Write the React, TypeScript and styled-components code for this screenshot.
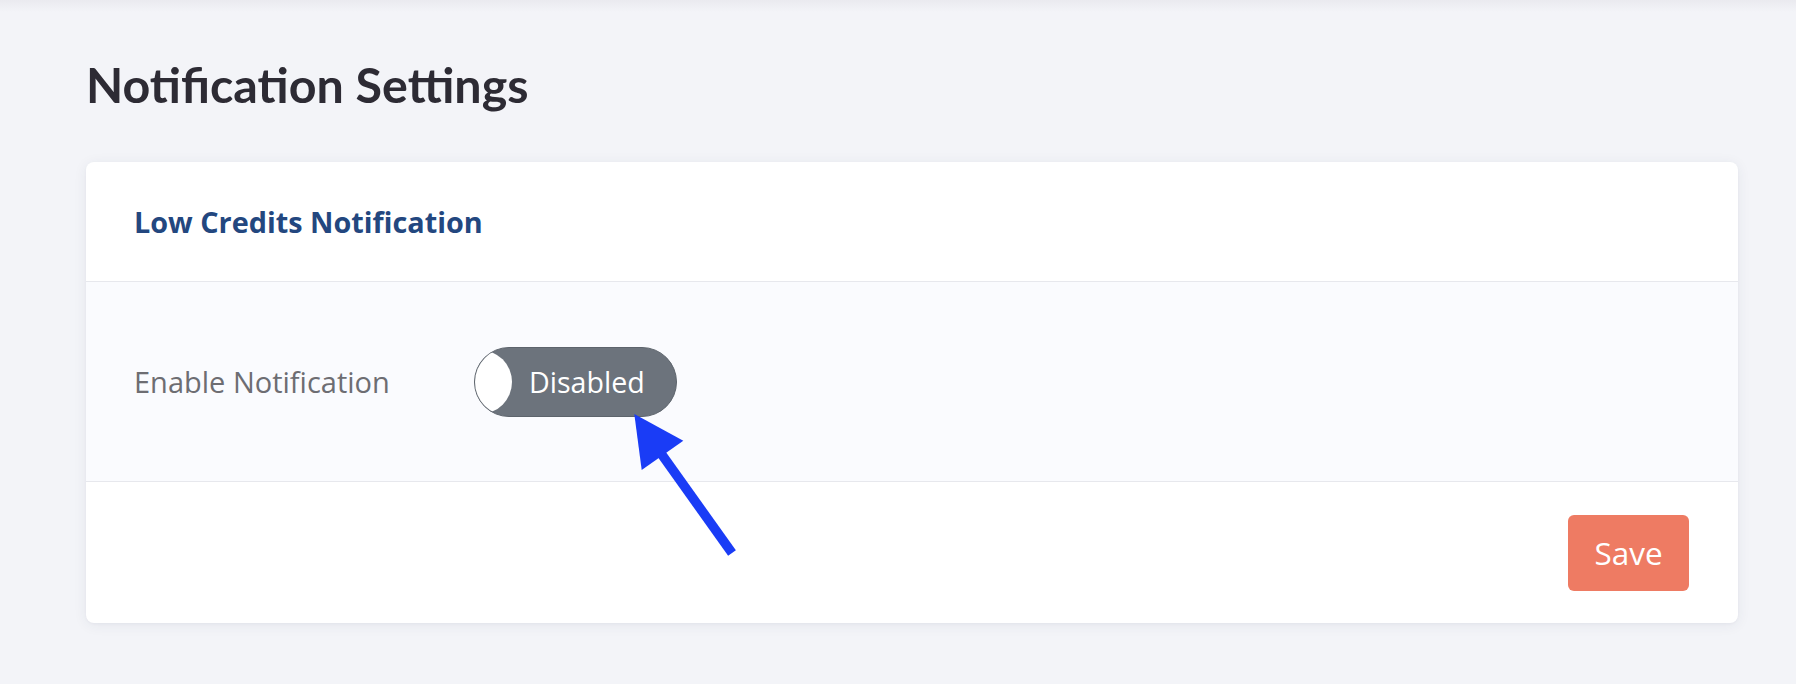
import React from "react";
import styled, { createGlobalStyle } from "styled-components";

const GlobalStyle = createGlobalStyle`
  html, body {
    margin: 0;
    padding: 0;
    background: #f3f4f8;
  }
  body {
    font-family: "Open Sans", "Noto Sans", sans-serif;
    -webkit-font-smoothing: antialiased;
  }
  * { box-sizing: border-box; }
`;

const Page = styled.main`
  position: relative;
  min-height: 684px;
  padding: 55px 58px 60px 86px;
  display: flex;
  flex-direction: column;
  gap: 48px;
  background: linear-gradient(to bottom, #eaeaef 0px, #f3f4f8 12px, #f3f4f8 100%);
`;

const Title = styled.h1`
  margin: 0;
  font-family: Lato, "Open Sans", sans-serif;
  font-weight: 700;
  font-size: 48.4px;
  line-height: 59px;
  color: #2d2b34;
`;

const Card = styled.section`
  background: #ffffff;
  border-radius: 8px;
  box-shadow: 0 2px 14px rgba(40, 50, 90, 0.07), 0 1px 3px rgba(40, 50, 90, 0.04);
  overflow: hidden;
  display: flex;
  flex-direction: column;
`;

const CardHeader = styled.header`
  height: 120px;
  padding: 0 48px;
  display: flex;
  align-items: center;
  border-bottom: 1px solid #e7e8ed;
`;

const CardTitle = styled.h2`
  margin: 0;
  font-family: "Open Sans", sans-serif;
  font-weight: 700;
  font-size: 28.8px;
  color: #23477f;
`;

const CardBody = styled.div`
  height: 200px;
  padding: 0 48px;
  display: flex;
  align-items: center;
  background: #fafbfe;
  border-bottom: 1px solid #e7e8ed;
`;

const FieldLabel = styled.span`
  width: 340px;
  font-family: "Open Sans", sans-serif;
  font-size: 29px;
  color: #6d6d72;
`;

const Toggle = styled.button<{ $on?: boolean }>`
  position: relative;
  width: 203px;
  height: 70px;
  padding: 0 0 0 54px;
  border: 1px solid #5d646c;
  border-radius: 35px;
  background: #6c737c;
  overflow: hidden;
  display: flex;
  align-items: center;
  cursor: pointer;
  font-family: "Open Sans", sans-serif;
  font-size: 28.6px;
  color: #ffffff;
`;

const Knob = styled.span`
  position: absolute;
  left: -27px;
  top: 50%;
  width: 64px;
  height: 64px;
  margin-top: -32px;
  border-radius: 50%;
  background: #ffffff;
`;

const CardFooter = styled.footer`
  height: 141px;
  padding: 0 49px;
  display: flex;
  align-items: center;
  justify-content: flex-end;
`;

const SaveButton = styled.button`
  width: 121px;
  height: 76px;
  border: none;
  border-radius: 6px;
  background: #ee7b63;
  color: #ffffff;
  font-family: "Open Sans", sans-serif;
  font-size: 31.5px;
  cursor: pointer;
`;

const Pointer = styled.svg`
  position: absolute;
  left: 620px;
  top: 405px;
  width: 130px;
  height: 160px;
  pointer-events: none;
`;

export default function App() {
  return (
    <>
      <GlobalStyle />
      <Page>
        <Title>Notification Settings</Title>
        <Card>
          <CardHeader>
            <CardTitle>Low Credits Notification</CardTitle>
          </CardHeader>
          <CardBody>
            <FieldLabel>Enable Notification</FieldLabel>
            <Toggle type="button" aria-pressed="false">
              <Knob />
              Disabled
            </Toggle>
          </CardBody>
          <CardFooter>
            <SaveButton type="button">Save</SaveButton>
          </CardFooter>
        </Card>
        <Pointer viewBox="0 0 130 160">
          <line x1="40" y1="47" x2="112" y2="148" stroke="#1a3cf6" strokeWidth="9.5" strokeLinecap="butt" />
          <polygon points="14.3,9 21.7,65 63.3,35.7" fill="#1a3cf6" />
        </Pointer>
      </Page>
    </>
  );
}
